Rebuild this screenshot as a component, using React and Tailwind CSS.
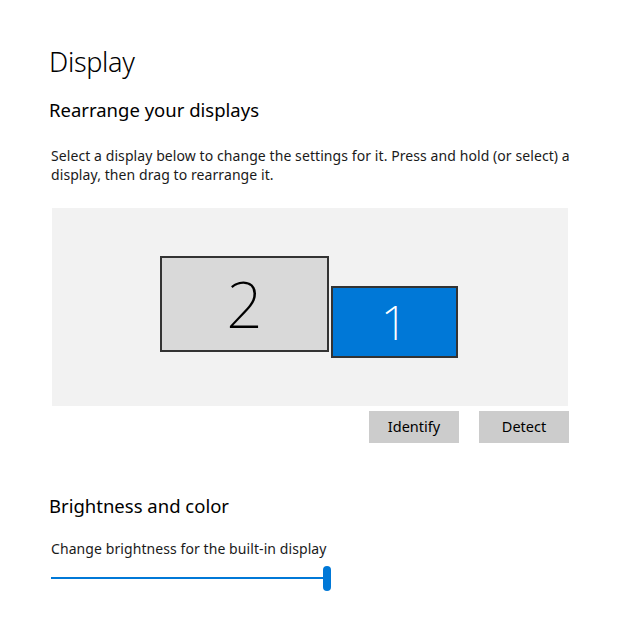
import React, { useState } from 'react';

const font = { fontFamily: '"Noto Sans", "Open Sans", sans-serif' };

function Monitor({ n, active, className }) {
  return (
    <div
      className={
        'flex items-center justify-center border-2 border-[#333333] ' +
        (active ? 'bg-[#0078d7] text-white ' : 'bg-[#d9d9d9] text-black ') +
        className
      }
    >
      <span className="font-extralight leading-none">{n}</span>
    </div>
  );
}

export default function App() {
  const [brightness] = useState(100);

  return (
    <div className="min-h-screen w-[618px] bg-white text-black pl-[49px] pt-[42px]" style={font}>
      {/* Header */}
      <h1 className="text-[27px] font-light leading-[40px] tracking-[-0.3px]">Display</h1>

      <h2 className="mt-[15px] text-[18.5px] leading-[26px]">Rearrange your displays</h2>

      <p className="mt-[23px] ml-[2px] w-[530px] text-[14px] leading-[19px] tracking-[0.08px] text-[#1a1a1a]">
        Select a display below to change the settings for it. Press and hold (or select) a display, then drag to rearrange it.
      </p>

      {/* Arrangement canvas */}
      <div className="mt-[24px] ml-[3px] flex h-[198px] w-[516px] items-start bg-[#f2f2f2] pl-[108px] pt-[48px]">
        <Monitor n="2" className="h-[96px] w-[169px] text-[64px]" />
        <Monitor n="1" active className="ml-[2px] mt-[30px] h-[72px] w-[127px] text-[48px]" />
      </div>

      <div className="ml-[3px] mt-[5px] flex w-[517px] justify-end gap-[20px]">
        <button className="h-[32px] w-[90px] bg-[#cccccc] text-[14.5px] text-black">Identify</button>
        <button className="h-[32px] w-[90px] bg-[#cccccc] text-[14.5px] text-black">Detect</button>
      </div>

      <h2 className="mt-[50px] text-[18.5px] leading-[26px]">Brightness and color</h2>

      <p className="mt-[20px] ml-[2px] text-[14px] leading-[19px] tracking-[0.08px] text-[#1a1a1a]">
        Change brightness for the built-in display
      </p>

      {/* Slider */}
      <div className="relative ml-[2px] mt-[8px] h-[26px] w-[281px]">
        <div className="absolute left-0 top-[11px] h-[2px] bg-[#0078d7]" style={{ width: `${(brightness / 100) * 276}px` }} />
        <div className="absolute left-[272px] top-0 h-[25px] w-[8px] rounded-full bg-[#0078d7]" />
      </div>
    </div>
  );
}
